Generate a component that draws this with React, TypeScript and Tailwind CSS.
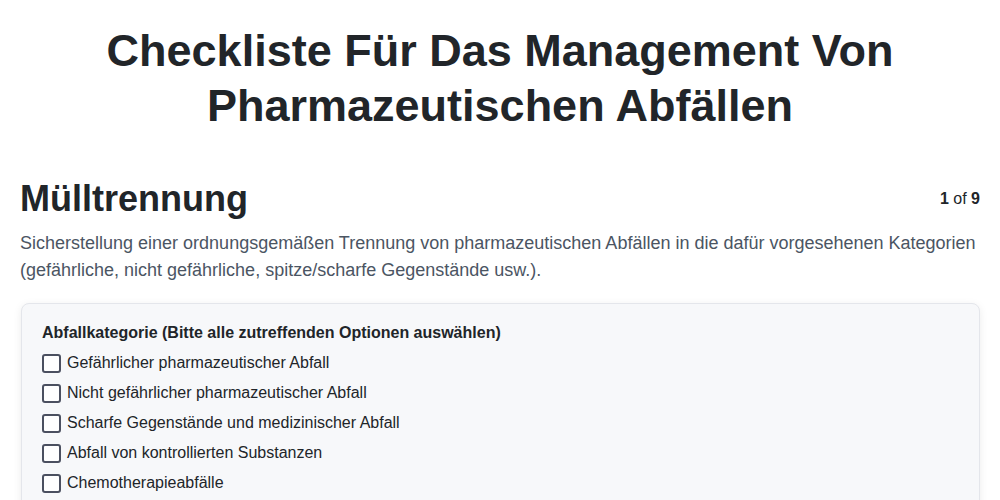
import { useState } from "react";

const OPTIONS = [
  "Gefährlicher pharmazeutischer Abfall",
  "Nicht gefährlicher pharmazeutischer Abfall",
  "Scharfe Gegenstände und medizinischer Abfall",
  "Abfall von kontrollierten Substanzen",
  "Chemotherapieabfälle",
  "Sonstige Abfälle",
];

function CheckRow({ label }: { label: string }) {
  const [checked, setChecked] = useState(false);
  return (
    <label className="flex cursor-pointer items-start gap-[6px] py-[3px] text-base leading-6 text-[#212529]">
      <span
        className={
          "mt-[3.5px] box-border h-[19px] w-[19px] shrink-0 rounded-[3px] border-2 border-[#4b5060] " +
          (checked ? "bg-[#4b5060]" : "bg-white")
        }
        onClick={() => setChecked((c) => !c)}
      />
      <span>{label}</span>
    </label>
  );
}

export default function App() {
  return (
    <div className="min-h-screen bg-white px-5 font-['Liberation_Sans',Arial,sans-serif]">
      <h1 className="mx-auto pt-[23px] text-center text-[45px] font-bold leading-[55px] text-[#212529]">
        Checkliste Für Das Management Von
        <br />
        Pharmazeutischen Abfällen
      </h1>

      <div className="mt-[46px] flex items-center justify-between">
        <h2 className="text-4xl font-bold leading-10 text-[#212529]">Mülltrennung</h2>
        <div className="text-base leading-6 text-[#212529]">
          <span className="font-bold">1</span> of <span className="font-bold">9</span>
        </div>
      </div>

      <p className="mt-[11px] text-lg leading-[27px] text-[#4b5563]">
        Sicherstellung einer ordnungsgemäßen Trennung von pharmazeutischen Abfällen in die dafür vorgesehenen Kategorien
        (gefährliche, nicht gefährliche, spitze/scharfe Gegenstände usw.).
      </p>

      <div className="mt-[19px] ml-px rounded-lg border border-[#e4e6eb] bg-[#f7f8fa] px-5 pb-6 pt-[16.5px] shadow-[0_2px_8px_rgba(0,0,0,0.08)]">
        <div className="mb-[3px] text-base font-bold leading-6 text-[#212529]">
          Abfallkategorie (Bitte alle zutreffenden Optionen auswählen)
        </div>
        {OPTIONS.map((o) => (
          <CheckRow key={o} label={o} />
        ))}
      </div>
    </div>
  );
}
